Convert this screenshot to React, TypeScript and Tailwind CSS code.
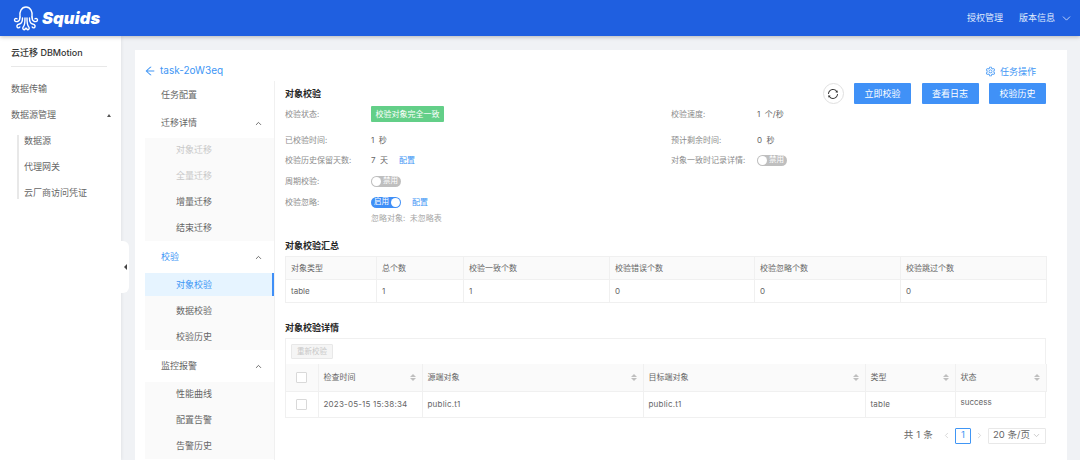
import { ChevronDown, ChevronUp, ChevronLeft, ChevronRight } from "lucide-react";
import { AiOutlineArrowLeft, AiOutlineSetting, AiOutlineSync } from "react-icons/ai";

const font = "font-['Inter','Noto_Sans_CJK_SC',sans-serif]";

const SquidLogo = () => (
  <svg width="26" height="26" viewBox="0 0 26 26" fill="none" stroke="white" strokeWidth="1.4" strokeLinecap="round" strokeLinejoin="round">
    <path d="M7 12C6 7 8.500 2 13 2s7 5 6 10" />
    <path d="M7 12c0 3-1 4-2.500 4.500-1.500.4-3 0-3-1.500s1.500-2 2.500-1.200" />
    <path d="M19 12c0 3 1 4 2.500 4.500 1.500.4 3 0 3-1.500s-1.500-2-2.500-1.200" />
    <path d="M9.500 13c0 4-1 5.500-3 6-1.500.4-3 1-2.500 2.800.4 1.400 2.200 1.400 2.800.2" />
    <path d="M16.500 13c0 4 1 5.500 3 6 1.500.4 3 1 2.500 2.800-.4 1.400-2.200 1.400-2.800.2" />
    <path d="M12 13c0 5 0 7-1.500 8.500-1 1-1 3 .5 3.200 1 .1 1.500-.7 1.300-1.500" />
    <path d="M14 13c0 5 0 7 1.500 8.500 1 1 1 3-.5 3.200-1 .1-1.500-.7-1.300-1.500" />
  </svg>
);

const Field = ({ label, children }: { label: string; children: React.ReactNode }) => (
  <div className="flex items-center h-4">
    <span className="w-[86px] text-[8px] text-[#8c8c8c] shrink-0">{label}</span>
    <div className="flex items-center text-[8px] text-[#666] whitespace-pre">{children}</div>
  </div>
);

const Toggle = ({ on }: { on?: boolean }) =>
  on ? (
    <span className="flex items-center justify-between w-[30px] h-[11px] rounded-full bg-[#3f8ff7] pl-[3px] pr-[1px] text-[7.5px] text-white">
      启用
      <span className="w-[9px] h-[9px] rounded-full bg-white" />
    </span>
  ) : (
    <span className="flex items-center justify-between w-[30px] h-[11px] rounded-full bg-[#bfbfbf] pl-[1px] pr-[3px] text-[7.5px] text-white">
      <span className="w-[9px] h-[9px] rounded-full bg-white" />
      禁用
    </span>
  );

const SortIcon = () => (
  <span className="flex flex-col gap-[1px]">
    <span className="w-0 h-0 border-x-[3px] border-x-transparent border-b-[3px] border-b-[#bfbfbf]" />
    <span className="w-0 h-0 border-x-[3px] border-x-transparent border-t-[3px] border-t-[#bfbfbf]" />
  </span>
);

const MenuItem = ({ text, disabled, active }: { text: string; disabled?: boolean; active?: boolean }) => (
  <div
    className={`h-[23px] flex items-center pl-[31px] text-[9px] ${
      active ? "bg-[#e6f4ff] text-[#4096f5] border-r-2 border-[#3f8ff7]" : disabled ? "text-[#c8c8c8]" : "text-[#666]"
    }`}
  >
    {text}
  </div>
);

const MenuGroup = ({ text, h, active, plain }: { text: string; h: string; active?: boolean; plain?: boolean }) => (
  <div className={`${h} flex items-center justify-between pl-[16px] pr-[11px] text-[9px] ${active ? "text-[#4096f5]" : "text-[#666]"}`}>
    {text}
    {!plain && <ChevronUp size={9} strokeWidth={2} className="text-[#444]" />}
  </div>
);

const SubPanel = ({ children }: { children: React.ReactNode }) => (
  <div className="flex flex-col gap-[3px] pb-[2px] bg-[#fafafa]">{children}</div>
);

const summaryHead = ["对象类型", "总个数", "校验一致个数", "校验错误个数", "校验忽略个数", "校验跳过个数"];
const summaryRow = ["table", "1", "1", "0", "0", "0"];
const summaryWidths = ["w-[91px]", "w-[87px]", "w-[146px]", "w-[145px]", "w-[146px]", "w-[146px]"];

const detailHead = [
  { text: "检查时间", w: "w-[104px]" },
  { text: "源端对象", w: "w-[221px]" },
  { text: "目标端对象", w: "w-[222px]" },
  { text: "类型", w: "w-[90px]" },
  { text: "状态", w: "w-[91px]" },
];
const detailRow = ["2023-05-15 15:38:34", "public.t1", "public.t1", "table"];

export default function App() {
  return (
    <div className={`w-[1080px] h-[460px] overflow-hidden flex flex-col bg-[#f0f2f5] ${font}`}>
      <header className="h-9 shrink-0 flex items-center justify-between bg-[#1f5fe0] pl-[13px] pr-[7px] shadow-[0_1px_4px_rgba(0,0,0,0.25)] z-10">
        <div className="flex items-center gap-[3px]">
          <SquidLogo />
          <span className="text-[16.5px] font-black italic text-white tracking-[0.1px]">Squids</span>
        </div>
        <div className="flex items-center text-[9px] text-[#dfe9fc]">
          <span>授权管理</span>
          <span className="ml-4">版本信息</span>
          <ChevronDown size={13} strokeWidth={1.5} className="ml-[5px]" />
        </div>
      </header>

      <div className="flex-1 flex min-h-0">
        <aside className="relative w-[121px] shrink-0 bg-white shadow-[1px_0_3px_rgba(0,0,0,0.06)] pl-[11px] pt-[10px]">
          <div className="w-[96px] h-[21px] border-b border-[#e8e8e8] text-[9px] font-medium text-[#333] whitespace-nowrap">云迁移 DBMotion</div>
          <div className="mt-[9px] h-[26px] flex items-center text-[9px] text-[#666]">数据传输</div>
          <div className="h-[26px] flex items-center justify-between pr-[10px] text-[9px] text-[#666]">
            数据源管理
            <span className="w-0 h-0 border-x-[2.5px] border-x-transparent border-b-[3px] border-b-[#555]" />
          </div>
          <div className="mt-[7px] ml-[6px] h-[64px] border-l-2 border-[#e8e8e8] pl-[5px] flex flex-col justify-between text-[9px] leading-[12px] text-[#666]">
            <div>数据源</div>
            <div>代理网关</div>
            <div className="whitespace-nowrap">云厂商访问凭证</div>
          </div>
          <div className="absolute left-[121px] top-[205px] w-2 h-[52px] bg-white rounded-r-md flex items-center justify-center">
            <span className="w-0 h-0 border-y-[3px] border-y-transparent border-r-[3px] border-r-[#444]" />
          </div>
        </aside>

        <main className="flex-1 min-w-0 pl-[14px] pr-[13px] pt-[14px]">
          <div className="h-full bg-white flex flex-col">
            <div className="h-[31px] shrink-0 flex items-end justify-between pl-[10px] pr-[31px] pb-[3px]">
              <div className="flex items-center gap-[4px] text-[10px] text-[#4096f5]">
                <AiOutlineArrowLeft size={12} className="-ml-px" />
                task-2oW3eq
              </div>
              <div className="flex items-center gap-[4px] text-[9px] text-[#4096f5]">
                <AiOutlineSetting size={11} />
                任务操作
              </div>
            </div>

            <div className="flex-1 flex min-h-0 pl-[10px]">
              <nav className="w-[130px] shrink-0 border-r border-[#f0f0f0]">
                <MenuGroup text="任务配置" h="h-[27px]" plain />
                <MenuGroup text="迁移详情" h="h-[30px]" />
                <SubPanel>
                  <MenuItem text="对象迁移" disabled />
                  <MenuItem text="全量迁移" disabled />
                  <MenuItem text="增量迁移" />
                  <MenuItem text="结束迁移" />
                </SubPanel>
                <MenuGroup text="校验" h="h-[32px]" active />
                <SubPanel>
                  <MenuItem text="对象校验" active />
                  <MenuItem text="数据校验" />
                  <MenuItem text="校验历史" />
                </SubPanel>
                <MenuGroup text="监控报警" h="h-[32px]" />
                <SubPanel>
                  <MenuItem text="性能曲线" />
                  <MenuItem text="配置告警" />
                  <MenuItem text="告警历史" />
                </SubPanel>
              </nav>

              <section className="flex-1 min-w-0 pl-[10px] pr-[21px] pt-[2px]">
                <div className="flex items-center justify-between h-[21px]">
                  <h2 className="text-[9px] font-bold text-[#262626]">对象校验</h2>
                  <div className="flex items-center gap-[10.5px]">
                    <span className="w-[21px] h-[21px] rounded-full border border-[#e0e0e0] flex items-center justify-center">
                      <AiOutlineSync size={12} className="text-[#333]" />
                    </span>
                    {["立即校验", "查看日志", "校验历史"].map((t) => (
                      <button key={t} className="w-[57px] h-[21px] rounded-[1px] bg-[#4091f7] text-[9px] text-white">
                        {t}
                      </button>
                    ))}
                  </div>
                </div>

                <div className="grid grid-cols-[386px_1fr] mt-[2px]">
                  <div className="flex flex-col">
                    <Field label="校验状态:">
                      <span className="w-[73px] h-4 rounded-[1px] bg-[#63cf88] flex items-center justify-center text-white">校验对象完全一致</span>
                    </Field>
                    <div className="mt-[10px]">
                      <Field label="已校验时间:">1  秒</Field>
                    </div>
                    <div className="mt-1">
                      <Field label="校验历史保留天数:">
                        7  天<span className="ml-[11px] text-[#4096f5]">配置</span>
                      </Field>
                    </div>
                    <div className="mt-[5px]">
                      <Field label="周期校验:">
                        <Toggle />
                      </Field>
                    </div>
                    <div className="mt-[5px]">
                      <Field label="校验忽略:">
                        <Toggle on />
                        <span className="ml-[11px] text-[#4096f5]">配置</span>
                      </Field>
                    </div>
                    <div className="h-4 ml-[86px] flex items-center text-[8px] text-[#a6a6a6] whitespace-pre">忽略对象:  未忽略表</div>
                  </div>
                  <div className="flex flex-col">
                    <Field label="校验速度:">1  个/秒</Field>
                    <div className="mt-[10px]">
                      <Field label="预计剩余时间:">0  秒</Field>
                    </div>
                    <div className="mt-1">
                      <Field label="对象一致时记录详情:">
                        <Toggle />
                      </Field>
                    </div>
                  </div>
                </div>

                <h2 className="mt-[12px] h-4 flex items-center text-[9px] font-bold text-[#262626]">对象校验汇总</h2>
                <table className="mt-[2px] w-[761px] table-fixed border-collapse text-[8px] text-[#666]">
                  <thead>
                    <tr className="h-[23px] bg-[#fafafa]">
                      {summaryHead.map((h, i) => (
                        <th key={h} className={`${summaryWidths[i]} border border-[#f0f0f0] pl-[5px] text-left font-normal`}>
                          {h}
                        </th>
                      ))}
                    </tr>
                  </thead>
                  <tbody>
                    <tr className="h-[23px]">
                      {summaryRow.map((c, i) => (
                        <td key={i} className="border border-[#f0f0f0] pl-[5px]">
                          {c}
                        </td>
                      ))}
                    </tr>
                  </tbody>
                </table>

                <h2 className="mt-[17px] h-4 flex items-center text-[9px] font-bold text-[#262626]">对象校验详情</h2>
                <div className="mt-[2px] w-[761px] border border-[#f0f0f0] border-b-0">
                  <div className="h-[25px] flex items-center pl-[5px]">
                    <span className="w-[42px] h-[15px] flex items-center justify-center rounded-[1px] border border-[#e8e8e8] bg-[#f5f5f5] text-[7.5px] text-[#c8c8c8]">重新校验</span>
                  </div>
                  <table className="w-full table-fixed border-collapse text-[8px] text-[#666]">
                    <thead>
                      <tr className="h-[27px] bg-[#fafafa]">
                        <th className="w-[32px] border-r border-b border-[#f0f0f0]">
                          <span className="block mx-auto w-[11px] h-[11px] rounded-[1px] border border-[#d9d9d9] bg-white" />
                        </th>
                        {detailHead.map((h) => (
                          <th key={h.text} className={`${h.w} border-r border-b border-[#f0f0f0] pl-[5px] pr-[6px] font-normal`}>
                            <div className="flex items-center justify-between">
                              {h.text}
                              <SortIcon />
                            </div>
                          </th>
                        ))}
                      </tr>
                    </thead>
                    <tbody>
                      <tr className="h-[26px]">
                        <td className="border-r border-b border-[#f0f0f0]">
                          <span className="block mx-auto w-[11px] h-[11px] rounded-[1px] border border-[#d9d9d9]" />
                        </td>
                        {detailRow.map((c, i) => (
                          <td key={i} className="border-r border-b border-[#f0f0f0] pl-[5px] tracking-[0.2px]">
                            {c}
                          </td>
                        ))}
                        <td className="border-b border-[#f0f0f0] pl-[5px] pb-[4px]">success</td>
                      </tr>
                    </tbody>
                  </table>
                </div>

                <div className="mt-[10px] flex items-center justify-end text-[9.5px] text-[#666]">
                  <span className="tracking-[0.2px]">共 1 条</span>
                  <ChevronLeft size={9} className="ml-[9px] text-[#ccc]" />
                  <span className="ml-[4px] w-[16px] h-[16px] flex items-center justify-center border border-[#4096f5] rounded-[1px] text-[#4096f5]">1</span>
                  <ChevronRight size={9} className="ml-[4px] text-[#ccc]" />
                  <span className="ml-[4px] w-[58px] h-[16px] flex items-center justify-between border border-[#e8e8e8] px-[4px] rounded-[1px]">
                    20 条/页
                    <ChevronDown size={9} className="text-[#bbb]" />
                  </span>
                </div>
              </section>
            </div>
          </div>
        </main>
      </div>
    </div>
  );
}
